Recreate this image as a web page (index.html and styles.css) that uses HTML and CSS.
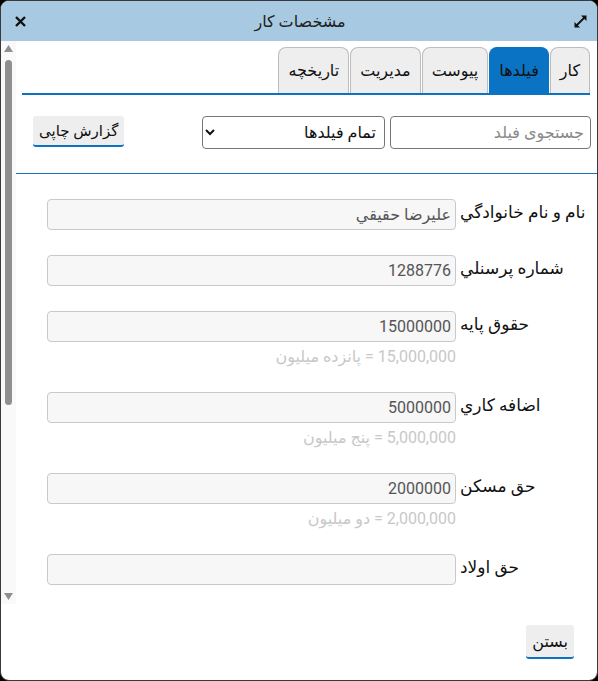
FILE: index.html
```html
<!DOCTYPE html>
<html lang="fa" dir="rtl">
<head>
  <meta charset="UTF-8">
  <meta name="viewport" content="width=device-width, initial-scale=1.0">
  <title>مشخصات کار</title>
  <link rel="stylesheet" href="styles.css">
</head>
<body>
  <div class="window">
    <div class="titlebar">
      <button class="win-btn expand" title="بزرگ کردن">
        <svg width="15" height="15" viewBox="0 0 15 15">
          <path d="M3 12 L12 3" stroke="#111" stroke-width="1.8"/>
          <path d="M8 1.5 H13.5 V7 Z" fill="#111"/>
          <path d="M1.5 8 V13.5 H7 Z" fill="#111"/>
        </svg>
      </button>
      <div class="title">مشخصات کار</div>
      <button class="win-btn close" title="بستن">
        <svg width="13" height="13" viewBox="0 0 13 13">
          <path d="M2 2 L11 11 M11 2 L2 11" stroke="#111" stroke-width="2.4"/>
        </svg>
      </button>
    </div>

    <div class="body">
      <div class="scroller">
        <div class="tabs">
          <div class="tab">کار</div>
          <div class="tab active">فیلدها</div>
          <div class="tab">پیوست</div>
          <div class="tab">مدیریت</div>
          <div class="tab">تاریخچه</div>
        </div>

        <div class="toolbar">
          <input type="text" class="search" placeholder="جستجوی فیلد">
          <select class="filter">
            <option>تمام فیلدها</option>
          </select>
          <button class="btn print">گزارش چاپی</button>
        </div>

        <div class="fields">
          <label class="label">نام و نام خانوادگي</label>
          <input class="field" type="text" value="علیرضا حقیقي">

          <label class="label">شماره پرسنلي</label>
          <input class="field" type="text" value="1288776">

          <label class="label">حقوق پایه</label>
          <div class="field-wrap">
            <input class="field" type="text" value="15000000">
            <div class="hint">15,000,000 = پانزده میلیون</div>
          </div>

          <label class="label">اضافه کاري</label>
          <div class="field-wrap">
            <input class="field" type="text" value="5000000">
            <div class="hint">5,000,000 = پنج میلیون</div>
          </div>

          <label class="label">حق مسکن</label>
          <div class="field-wrap">
            <input class="field" type="text" value="2000000">
            <div class="hint">2,000,000 = دو میلیون</div>
          </div>

          <label class="label">حق اولاد</label>
          <input class="field" type="text" value="">
        </div>
      </div>

      <!-- vertical scrollbar, on the left for rtl -->
      <div class="vbar">
        <div class="vbar-arrow">
          <svg width="9" height="7" viewBox="0 0 9 7"><path d="M4.5 0 L9 7 H0 Z" fill="#8f8f8f"/></svg>
        </div>
        <div class="vbar-track">
          <div class="vbar-thumb"></div>
        </div>
        <div class="vbar-arrow">
          <svg width="9" height="7" viewBox="0 0 9 7"><path d="M0 0 H9 L4.5 7 Z" fill="#8f8f8f"/></svg>
        </div>
      </div>
    </div>

    <div class="footer">
      <button class="btn">بستن</button>
    </div>
  </div>
</body>
</html>
```

FILE: styles.css
```css
html, body {
  margin: 0;
  padding: 0;
  height: 100%;
  background: #000;
}
body {
  font-family: Roboto, "DejaVu Sans", sans-serif;
  font-size: 16px;
  color: #111;
}
.window {
  box-sizing: border-box;
  height: 681px;
  border: 1px solid #3a3a3a;
  border-radius: 9px;
  background: #fff;
  overflow: hidden;
  display: flex;
  flex-direction: column;
}
.titlebar {
  height: 40px;
  flex-shrink: 0;
  background: #a7cae2;
  display: flex;
  align-items: center;
  padding: 0 9px 0 11px;
}
.title {
  flex: 1;
  text-align: center;
  font-size: 16px;
  color: #222;
}
.win-btn {
  border: 0;
  background: none;
  padding: 0;
  margin: 0;
  width: 16px;
  height: 16px;
  display: flex;
  align-items: center;
  justify-content: center;
}

.body {
  height: 563px;
  flex-shrink: 0;
  display: flex;
}
.scroller {
  flex: 1;
  overflow: hidden;
}
.vbar {
  width: 15px;
  display: flex;
  flex-direction: column;
  background: #f9f9f9;
}
.vbar-arrow {
  height: 15px;
  display: flex;
  align-items: center;
  justify-content: center;
}
.vbar-track {
  flex: 1;
  padding: 4px 4px;
}
.vbar-thumb {
  height: 345px;
  background: #8f8f8f;
  border-radius: 4px;
}

.tabs {
  display: flex;
  gap: 1px;
  margin: 6px 7px 0 6px;
  border-bottom: 2px solid #0a73c4;
}
.tab {
  background: #eeeeee;
  border: 1px solid #bdbdbd;
  border-bottom: 0;
  border-radius: 8px 8px 0 0;
  height: 45px;
  padding: 0 9px;
  display: flex;
  align-items: center;
  font-size: 16px;
}
.tab.active {
  background: #0a73c4;
  border-color: #0a73c4;
}
.toolbar {
  display: flex;
  align-items: flex-start;
  padding: 21px 6px 24px 17px;
  border-bottom: 1px solid #1a6fb8;
}
.search, .filter {
  box-sizing: border-box;
  height: 33px;
  border: 1px solid #767676;
  border-radius: 4px;
  font-family: inherit;
  font-size: 16px;
  background: #fff;
}
.search {
  width: 201px;
  padding: 0 6px;
}
.search::placeholder {
  color: #8a8a8a;
}
.filter {
  width: 183px;
  margin-right: 5px;
  padding: 0 4px;
  color: #111;
}
.btn {
  font-family: inherit;
  font-size: 16px;
  color: #111;
  background: #eeeeee;
  border: 0;
  border-bottom: 2px solid #0a73c4;
  border-radius: 3px;
  padding: 0 8px;
  height: 31px;
}
.print {
  margin-right: auto;
  font-size: 15px;
  padding: 0 6px;
}
.fields {
  display: grid;
  grid-template-columns: 132px 1fr;
  column-gap: 4px;
  row-gap: 25px;
  padding: 25px 5px 30px 31px;
}
.label {
  text-align: left;
  align-self: start;
  padding-top: 3px;
  font-size: 17px;
}
.field {
  box-sizing: border-box;
  width: 100%;
  height: 31px;
  border: 1px solid #c9c9c9;
  border-radius: 4px;
  background: #f7f7f7;
  font-family: inherit;
  font-size: 16px;
  color: #555;
  padding: 0 4px;
  display: block;
}
.hint {
  margin-top: 5px;
  color: #c8c8c8;
  font-size: 16px;
  line-height: 20px;
}
.footer {
  flex: 1;
  display: flex;
  justify-content: flex-start;
  align-items: flex-start;
  padding: 21px 23px 0;
}
.footer .btn {
  height: 34px;
  padding: 0 6px;
}
```
